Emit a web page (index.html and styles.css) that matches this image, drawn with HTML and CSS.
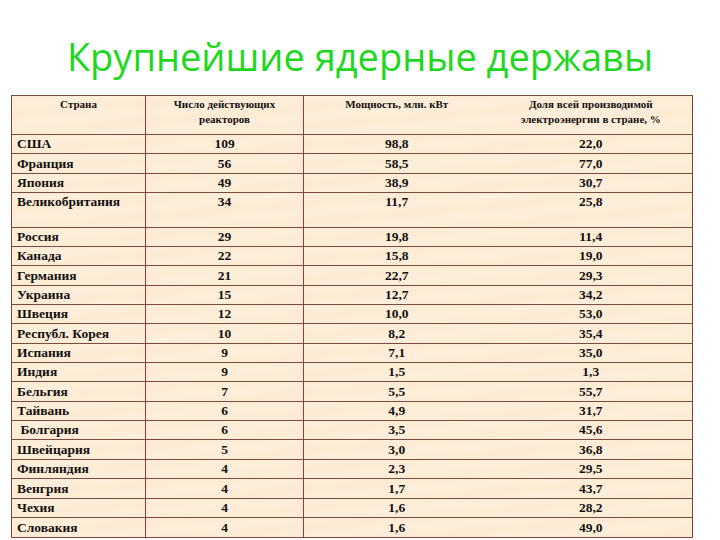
FILE: index.html
```html
<!DOCTYPE html>
<html lang="ru">
<head>
<meta charset="utf-8">
<title>Крупнейшие ядерные державы</title>
<link rel="stylesheet" href="styles.css">
</head>
<body>
<div class="slide">
  <h1 class="title">Крупнейшие ядерные державы</h1>
  <table class="data">
    <colgroup>
      <col class="c1"><col class="c2"><col class="c3"><col class="c4">
    </colgroup>
    <thead>
      <tr class="head">
        <th>Страна</th>
        <th>Число действующих<br>реакторов</th>
        <th class="nob">Мощность, млн. кВт</th>
        <th>Доля всей производимой<br>электроэнергии в стране, %</th>
      </tr>
    </thead>
    <tbody>
      <tr class="r"><td>США</td><td>109</td><td class="nob">98,8</td><td>22,0</td></tr>
      <tr class="r r2"><td>Франция</td><td>56</td><td class="nob">58,5</td><td>77,0</td></tr>
      <tr class="r"><td>Япония</td><td>49</td><td class="nob">38,9</td><td>30,7</td></tr>
      <tr class="r tall"><td>Великобритания</td><td>34</td><td class="nob">11,7</td><td>25,8</td></tr>
      <tr class="r"><td>Россия</td><td>29</td><td class="nob">19,8</td><td>11,4</td></tr>
      <tr class="r"><td>Канада</td><td>22</td><td class="nob">15,8</td><td>19,0</td></tr>
      <tr class="r r2"><td>Германия</td><td>21</td><td class="nob">22,7</td><td>29,3</td></tr>
      <tr class="r"><td>Украина</td><td>15</td><td class="nob">12,7</td><td>34,2</td></tr>
      <tr class="r"><td>Швеция</td><td>12</td><td class="nob">10,0</td><td>53,0</td></tr>
      <tr class="r r2"><td>Республ. Корея</td><td>10</td><td class="nob">8,2</td><td>35,4</td></tr>
      <tr class="r"><td>Испания</td><td>9</td><td class="nob">7,1</td><td>35,0</td></tr>
      <tr class="r"><td>Индия</td><td>9</td><td class="nob">1,5</td><td>1,3</td></tr>
      <tr class="r r2"><td>Бельгия</td><td>7</td><td class="nob">5,5</td><td>55,7</td></tr>
      <tr class="r"><td>Тайвань</td><td>6</td><td class="nob">4,9</td><td>31,7</td></tr>
      <tr class="r"><td>&nbsp;Болгария</td><td>6</td><td class="nob">3,5</td><td>45,6</td></tr>
      <tr class="r r2"><td>Швейцария</td><td>5</td><td class="nob">3,0</td><td>36,8</td></tr>
      <tr class="r"><td>Финляндия</td><td>4</td><td class="nob">2,3</td><td>29,5</td></tr>
      <tr class="r r2"><td>Венгрия</td><td>4</td><td class="nob">1,7</td><td>43,7</td></tr>
      <tr class="r"><td>Чехия</td><td>4</td><td class="nob">1,6</td><td>28,2</td></tr>
      <tr class="r r2"><td>Словакия</td><td>4</td><td class="nob">1,6</td><td>49,0</td></tr>
    </tbody>
  </table>
</div>
</body>
</html>
```

FILE: styles.css
```css
html, body {
  margin: 0;
  padding: 0;
  background: #ffffff;
}

.slide {
  width: 720px;
  height: 540px;
  overflow: hidden;
  padding-left: 11px;
  box-sizing: border-box;
}

.title {
  margin: 0;
  height: 95px;
  padding-top: 31px;
  box-sizing: border-box;
  font-family: "Open Sans", "Noto Sans", sans-serif;
  font-weight: 400;
  font-size: 38px;
  line-height: 50px;
  letter-spacing: 0;
  color: #1ed81e;
  text-align: center;
  padding-right: 11px;
  white-space: nowrap;
}

.data {
  border-collapse: collapse;
  table-layout: fixed;
  width: 681px;
  background-color: #fdebd4;
  background-image: repeating-linear-gradient(175deg, rgba(255,255,255,0) 0px, rgba(255,250,240,0.22) 9px, rgba(255,255,255,0) 19px);
  font-family: "Liberation Serif", "Times New Roman", serif;
  font-weight: 700;
  color: #141010;
  border: 1px solid #7d4a40;
}

.c1 { width: 134px; }
.c2 { width: 158px; }
.c3 { width: 186px; }
.c4 { width: 203px; }

.data th,
.data td {
  border-left: 1px solid #9a3a34;
  border-right: 1px solid #9a3a34;
  padding: 0;
}

.data th.nob,
.data td.nob {
  border-right: none;
}

.data td.nob + td,
.data th.nob + th {
  border-left: none;
}

.head th {
  height: 37px;
  vertical-align: top;
  padding-top: 1px;
  font-size: 11px;
  line-height: 15px;
  font-weight: 700;
  text-align: center;
  border-bottom: 1px solid #7d4a40;
}

.r td {
  height: 18px;
  font-size: 13.5px;
  line-height: 18px;
  text-align: center;
  vertical-align: middle;
  border-bottom: 1px solid #7d4a40;
}

.r2 td {
  height: 19px;
}

.r td:first-child {
  text-align: left;
  padding-left: 5px;
  white-space: pre;
}

.tall td {
  height: 34px;
  vertical-align: top;
  padding-top: 0px;
}
```
